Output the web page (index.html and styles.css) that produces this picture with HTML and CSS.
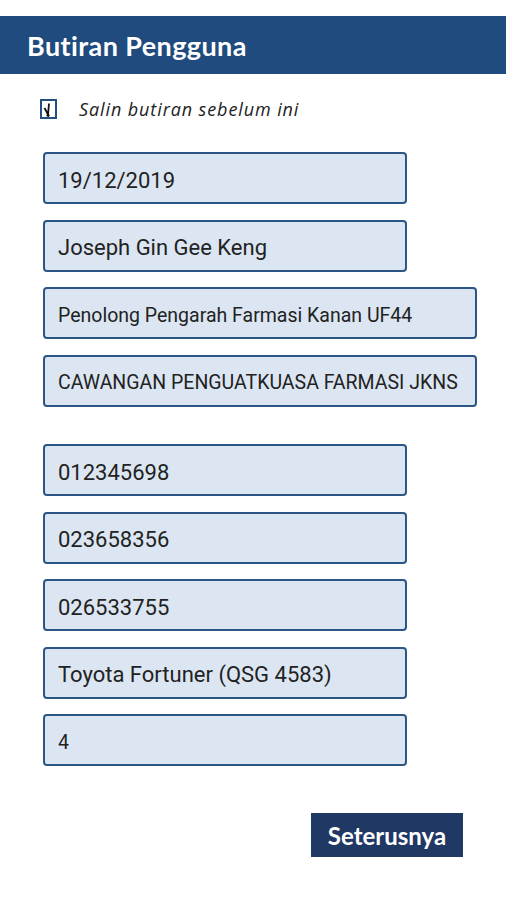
FILE: index.html
```html
<!DOCTYPE html>
<html lang="ms">
<head>
    <meta charset="UTF-8">
    <meta name="viewport" content="width=device-width, initial-scale=1.0">
    <title>Butiran Pengguna</title>
    <link rel="stylesheet" href="styles.css">
</head>
<body>
    <div class="header">
        <h1>Butiran Pengguna</h1>
    </div>

    <label class="copy-row">
        <span class="check-box">
            <svg width="13" height="16" viewBox="0 0 13 16">
                <path d="M2.5 7 L6 13.5 L7 2.5" fill="none" stroke="#111" stroke-width="1.8"/>
                <circle cx="6" cy="14.3" r="1.5" fill="#111"/>
            </svg>
        </span>
        <span class="copy-text">Salin butiran sebelum ini</span>
    </label>

    <form class="fields">
        <div class="field short">19/12/2019</div>
        <div class="field short">Joseph Gin Gee Keng</div>
        <div class="field wide small">Penolong Pengarah Farmasi Kanan UF44</div>
        <div class="field wide small">CAWANGAN PENGUATKUASA FARMASI JKNS</div>

        <div class="field short spaced">012345698</div>
        <div class="field short">023658356</div>
        <div class="field short">026533755</div>
        <div class="field short">Toyota Fortuner (QSG 4583)</div>
        <div class="field short small">4</div>
    </form>

    <div class="actions">
        <button type="button" class="next-btn">Seterusnya</button>
    </div>
</body>
</html>
```

FILE: styles.css
```css
body {
    margin: 0;
    padding: 0;
    background-color: #ffffff;
    font-family: Roboto, "Noto Sans", sans-serif;
    color: #222222;
}

.header {
    margin-top: 16px;
    height: 58px;
    background-color: #1f4b7e;
    display: flex;
    align-items: center;
    padding-left: 27px;
}

.header h1 {
    margin: 0;
    font-family: Lato, "Open Sans", sans-serif;
    font-weight: bold;
    font-size: 27px;
    letter-spacing: 0.4px;
    color: #ffffff;
}

.copy-row {
    display: flex;
    align-items: center;
    margin: 25px 0 0 40px;
    height: 20px;
}

.check-box {
    width: 13px;
    height: 16px;
    border: 2px solid #24507f;
    display: flex;
    align-items: center;
    justify-content: center;
}

.copy-text {
    margin-left: 22px;
    font-family: "Open Sans", sans-serif;
    font-style: italic;
    font-size: 18px;
    letter-spacing: 0.9px;
    color: #222222;
}

.fields {
    display: flex;
    flex-direction: column;
    gap: 15.5px;
    margin: 33px 0 0 43px;
}

.field {
    box-sizing: border-box;
    height: 52px;
    padding: 4px 0 0 13px;
    display: flex;
    align-items: center;
    background-color: #dce6f2;
    border: 2px solid #2c5785;
    border-radius: 4px;
    font-size: 22px;
    color: #222222;
}

.field.short {
    width: 364px;
}

.field.wide {
    width: 434px;
}

.field.small {
    font-size: 19.5px;
}

.field.spaced {
    margin-top: 22px;
}

.actions {
    display: flex;
    justify-content: flex-end;
    padding-right: 43px;
    margin-top: 47px;
}

.next-btn {
    width: 152px;
    height: 44px;
    border: none;
    background-color: #1f3864;
    color: #ffffff;
    font-family: Lato, "Open Sans", sans-serif;
    font-weight: bold;
    font-size: 24px;
    cursor: pointer;
}
```
